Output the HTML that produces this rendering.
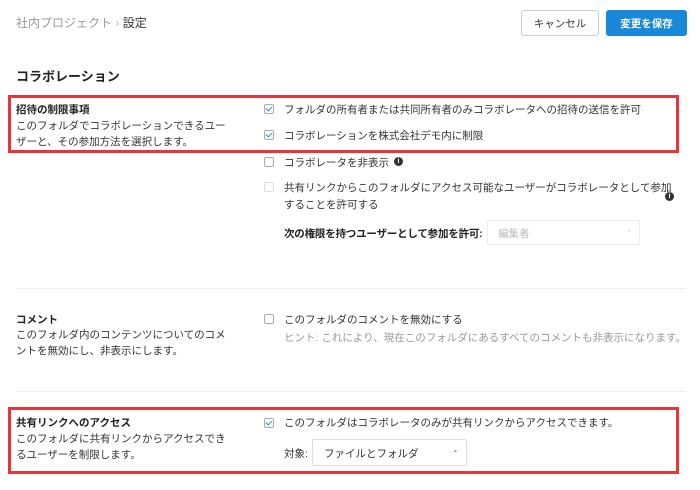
<!DOCTYPE html>
<html><head><meta charset="utf-8"><style>
*{margin:0;padding:0;box-sizing:border-box}
body{width:700px;height:490px;background:#fff;font-family:"Liberation Sans","Noto Sans CJK JP",sans-serif;color:#333;position:relative;overflow:hidden;font-size:10.5px}
.a{position:absolute;white-space:nowrap}
.btn{position:absolute;height:26px;border-radius:3px;font-size:10.5px;display:flex;align-items:center;justify-content:center}
.red{position:absolute;border:3px solid #e8343a}
.cb{position:absolute;width:10px;height:10px;border:1px solid #aaa;border-radius:2px;background:#fff}
.cb.on::after{content:"";position:absolute;left:2px;top:0px;width:3px;height:5px;border:solid #1a88d8;border-width:0 1.5px 1.5px 0;transform:rotate(45deg)}
.b{font-weight:bold;color:#222}
.g{color:#999}
.info{position:absolute;width:9px;height:9px;border-radius:50%;background:#333;color:#fff;font-size:7px;line-height:9px;text-align:center;font-weight:bold}
.hr{position:absolute;left:16px;width:670px;height:1px;background:#eee}
.sel{position:absolute;border:1px solid #ddd;border-radius:2px;background:#fff}
</style></head><body>
<div class="a" style="left:16px;top:14px;font-size:12px;color:#999">社内プロジェクト <span style="color:#bbb">›</span> <span style="color:#333">設定</span></div>
<div class="btn" style="left:521px;top:10px;width:78px;border:1px solid #ccc;color:#333">キャンセル</div>
<div class="btn" style="left:606px;top:10px;width:81px;background:#1a88d8;color:#fff;font-weight:bold">変更を保存</div>
<div class="a b" style="left:16px;top:66px;font-size:13px">コラボレーション</div>

<div class="red" style="left:8px;top:95px;width:671px;height:58px"></div>
<div class="a b" style="left:16px;top:102px">招待の制限事項</div>
<div class="a" style="left:16px;top:118px;line-height:16px">このフォルダでコラボレーションできるユー<br>ザーと、その参加方法を選択します。</div>
<div class="cb on" style="left:264px;top:104px"></div>
<div class="a" style="left:284px;top:102px">フォルダの所有者または共同所有者のみコラボレータへの招待の送信を許可</div>
<div class="cb on" style="left:264px;top:130px"></div>
<div class="a" style="left:284px;top:128px">コラボレーションを株式会社デモ内に制限</div>
<div class="cb" style="left:264px;top:157px"></div>
<div class="a" style="left:284px;top:155px">コラボレータを非表示</div>
<div class="info" style="left:394px;top:157px">i</div>
<div class="cb" style="left:264px;top:182px;border-color:#ddd"></div>
<div class="a" style="left:284px;top:180px;line-height:17px">共有リンクからこのフォルダにアクセス可能なユーザーがコラボレータとして参加<br>することを許可する</div>
<div class="info" style="left:665px;top:192px">i</div>
<div class="a b" style="left:284px;top:226px;letter-spacing:-0.2px">次の権限を持つユーザーとして参加を許可:</div>
<div class="sel" style="left:487px;top:220px;width:153px;height:25px;border-color:#eee"><span class="a" style="left:10px;top:5px;color:#bbb">編集者</span><span class="a" style="right:8px;top:4px;color:#ccc">-</span></div>

<div class="hr" style="top:288px"></div>
<div class="a b" style="left:16px;top:312px">コメント</div>
<div class="a" style="left:16px;top:327px;line-height:16px">このフォルダ内のコンテンツについてのコメ<br>ントを無効にし、非表示にします。</div>
<div class="cb" style="left:264px;top:314px"></div>
<div class="a" style="left:284px;top:312px">このフォルダのコメントを無効にする</div>
<div class="a g" style="left:284px;top:330px">ヒント: これにより、現在このフォルダにあるすべてのコメントも非表示になります。</div>

<div class="hr" style="top:391px"></div>
<div class="red" style="left:8px;top:407px;width:671px;height:67px"></div>
<div class="a b" style="left:16px;top:415px">共有リンクへのアクセス</div>
<div class="a" style="left:16px;top:431px;line-height:16px">このフォルダに共有リンクからアクセスでき<br>るユーザーを制限します。</div>
<div class="cb on" style="left:264px;top:418px"></div>
<div class="a" style="left:284px;top:415px">このフォルダはコラボレータのみが共有リンクからアクセスできます。</div>
<div class="a" style="left:284px;top:446px">対象:</div>
<div class="sel" style="left:312px;top:439px;width:155px;height:27px"><span class="a" style="left:11px;top:6px;color:#333">ファイルとフォルダ</span><span class="a" style="right:9px;top:5px;color:#333">-</span></div>
</body></html>
